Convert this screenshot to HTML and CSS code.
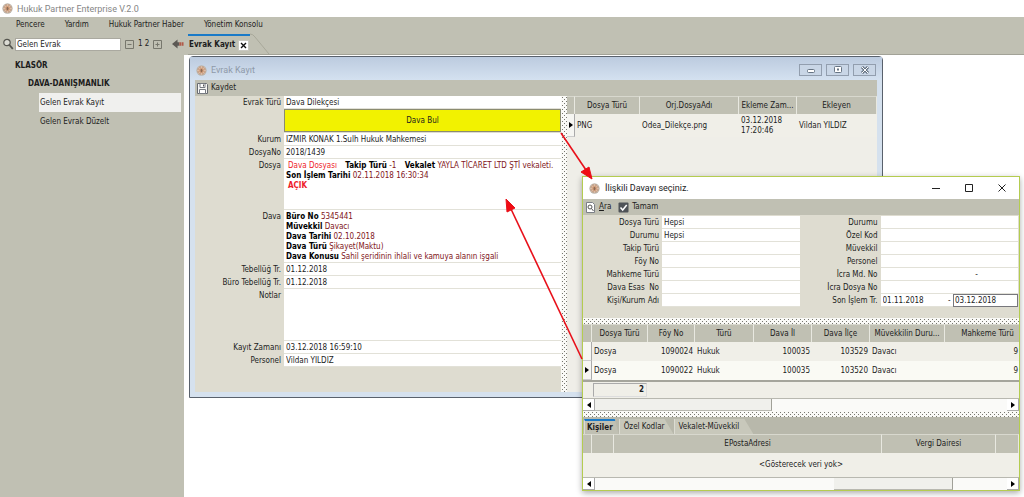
FILE: index.html
```html
<!DOCTYPE html>
<html lang="tr">
<head>
<meta charset="utf-8">
<title>Hukuk Partner Enterprise V.2.0</title>
<link rel="stylesheet" href="styles.css">
</head>
<body>
<svg class="defs" aria-hidden="true">
  <symbol id="logo" viewBox="0 0 12 12">
    <circle cx="6" cy="6" r="5.6" fill="#b9b4ac"/>
    <circle cx="6" cy="6" r="4.8" fill="#c9a58c"/>
    <path d="M6 1.2v9.6M1.2 6h9.6M2.6 2.6l6.8 6.8M9.4 2.6L2.6 9.4" stroke="#e3cdbb" stroke-width=".7"/>
    <circle cx="6" cy="6" r="2.6" fill="#d9a27c"/>
    <path d="M4.8 5.2l1.300-1 1.2 1.2-.6 2.6H5.2z" fill="#8c6a56"/>
  </symbol>
</svg>

<header class="titlebar"><svg class="logo"><use href="#logo"/></svg><span>Hukuk Partner Enterprise V.2.0</span></header>
<nav class="menu">
  <a href="#">Pencere</a><a href="#">Yardım</a><a href="#">Hukuk Partner Haber</a><a href="#">Yönetim Konsolu</a>
</nav>

<div class="workspace">
  <aside class="sidebar">
    <div class="search">
      <svg class="lens" viewBox="0 0 12 12"><circle cx="5" cy="4.5" r="3.2" fill="#dcdcd4" stroke="#55554f" stroke-width="1.2"/><path d="M7.4 7l3.4 3.8" stroke="#55554f" stroke-width="1.8"/></svg>
      <input class="search-input" type="text" value="Gelen Evrak" aria-label="Ara">
      <button class="step" aria-label="Daralt"><svg viewBox="0 0 9 9"><path d="M.5.5h8v8h-8zM2.5 4.5h4" fill="none" stroke="#77776d"/></svg></button>
      <span>1 2</span>
      <button class="step" aria-label="Genişlet"><svg viewBox="0 0 9 9"><path d="M.5.5h8v8h-8zM2.5 4.5h4M4.5 2.5v4" fill="none" stroke="#77776d"/></svg></button>
      <button class="back" aria-label="Geri"><svg viewBox="0 0 13 10"><path d="M0 5l6-5v3h2v4H6v3z" fill="#5c5954"/><path d="M8 3h2v4h-2zM10.500 3h2v4h-2z" fill="#b05a4a"/></svg></button>
    </div>
    <ul class="tree">
      <li class="root">KLASÖR</li>
      <li class="branch">DAVA-DANIŞMANLIK</li>
      <li><a class="leaf selected" href="#">Gelen Evrak Kayıt</a></li>
      <li><a class="leaf" href="#">Gelen Evrak Düzelt</a></li>
    </ul>
  </aside>

  <main class="main">
    <div class="doc-tabs">
      <div class="doc-tab"><span>Evrak Kayıt</span><button class="tab-close" aria-label="Kapat"><svg viewBox="0 0 9 9"><path d="M2 2l5 5M7 2L2 7" stroke="#111" stroke-width="1.400"/></svg></button></div>
      <svg class="slope" viewBox="0 0 20 21"><path d="M0 1q3 0 5 3l14 17" fill="none" stroke="#a8a89a"/></svg>
    </div>
    <div class="desktop">
      <section class="window">
        <header class="window-title">
          <svg class="logo"><use href="#logo"/></svg><h2>Evrak Kayıt</h2>
          <button class="win-btn" aria-label="Küçült"><svg viewBox="0 0 12 8"><rect x="2.500" y="3.500" width="7" height="3" rx="1" fill="#fff" stroke="#667484"/></svg></button>
          <button class="win-btn" aria-label="Büyüt"><svg viewBox="0 0 12 8"><rect x="2.500" y=".5" width="7" height="6" rx="1" fill="#fff" stroke="#667484"/><path d="M5 2.500h2v2H5z" fill="#667484"/></svg></button>
          <button class="win-btn" aria-label="Kapat"><svg viewBox="0 0 12 8"><path d="M3 1l6 6M9 1L3 7" stroke="#667484" stroke-width="3"/><path d="M3 1l6 6M9 1L3 7" stroke="#fff"/></svg></button>
        </header>
        <div class="window-body">
          <div class="toolbar">
            <button class="tool"><svg viewBox="0 0 11 11"><path d="M.5.5h9l1 1v9H.5z" fill="#f6f6f4" stroke="#666a70"/><path d="M3 .5h5v4H3zM2.500 6.500h6v4h-6z" fill="#fff" stroke="#777b82"/><path d="M6 1.500h1v2H6z" fill="#555"/></svg>Kaydet</button>
          </div>
          <div class="panes">
            <form class="record">
              <label for="tur">Evrak Türü</label><input id="tur" class="field" value="Dava Dilekçesi">
              <span></span><button class="find" type="button">Dava Bul</button>
              <label for="kurum">Kurum</label><input id="kurum" class="field" value="İZMİR KONAK 1.Sulh Hukuk Mahkemesi">
              <label for="dosyano">DosyaNo</label><input id="dosyano" class="field" value="2018/1439">
              <span class="label">Dosya</span>
              <div class="rich">
                <p class="inset"><i class="red">Dava Dosyası</i> <b class="spaced">Takip Türü</b> <i>-1</i> <b class="spaced">Vekalet</b> <i>YAYLA TİCARET LTD ŞTİ vekaleti.</i></p>
                <p><b>Son İşlem Tarihi</b> <i>02.11.2018 16:30:34</i></p>
                <p class="inset"><b class="red">AÇIK</b></p>
              </div>
              <span class="label">Dava</span>
              <div class="rich long">
                <p><b>Büro No</b> <i>5345441</i></p>
                <p><b>Müvekkil</b> <i>Davacı</i></p>
                <p><b>Dava Tarihi</b> <i>02.10.2018</i></p>
                <p><b>Dava Türü</b> <i>Şikayet(Maktu)</i></p>
                <p><b>Dava Konusu</b> <i>Sahil şeridinin ihlali ve kamuya alanın işgali</i></p>
              </div>
              <label for="teb">Tebellüğ Tr.</label><input id="teb" class="field" value="01.12.2018">
              <label for="bteb">Büro Tebellüğ Tr.</label><input id="bteb" class="field" value="01.12.2018">
              <label for="notlar">Notlar</label><textarea id="notlar" class="field notes"></textarea>
              <label for="kayit">Kayıt Zamanı</label><input id="kayit" class="field" value="03.12.2018 16:59:10">
              <label for="pers">Personel</label><input id="pers" class="field" value="Vildan YILDIZ">
            </form>
            <div class="splitter"></div>
            <div class="files">
              <table class="grid">
                <colgroup><col class="w-ind"><col class="w-type"><col class="w-name"><col class="w-date"><col></colgroup>
                <thead><tr><th></th><th>Dosya Türü</th><th>Orj.DosyaAdı</th><th>Ekleme Zam...</th><th>Ekleyen</th></tr></thead>
                <tbody><tr class="tall"><td class="mark"><span class="tri"></span></td><td>PNG</td><td>Odea_Dilekçe.png</td><td>03.12.2018 17:20:46</td><td>Vildan YILDIZ</td></tr></tbody>
              </table>
            </div>
          </div>
        </div>
      </section>

      <section class="dialog" role="dialog" aria-label="İlişkili Davayı seçiniz.">
        <header class="dialog-title">
          <svg class="logo"><use href="#logo"/></svg><h2>İlişkili Davayı seçiniz.</h2>
          <button aria-label="Küçült"><svg viewBox="0 0 10 10"><path d="M1 5.500h8" stroke="#222"/></svg></button>
          <button aria-label="Büyüt"><svg viewBox="0 0 10 10"><path d="M1.500 1.500h7v7h-7z" fill="none" stroke="#222"/></svg></button>
          <button aria-label="Kapat"><svg viewBox="0 0 10 10"><path d="M1.500 1.500l7 7M8.500 1.500l-7 7" stroke="#222"/></svg></button>
        </header>
        <div class="toolbar">
          <button class="tool"><svg viewBox="0 0 11 11"><path d="M1.500.5h6l2 2v8h-8z" fill="#fff" stroke="#7b7f86"/><circle cx="5" cy="5" r="2" fill="none" stroke="#555"/><path d="M6.500 6.500l2 2.500" stroke="#555"/></svg><span><u>A</u>ra</span></button>
          <button class="tool"><svg viewBox="0 0 11 11"><rect x=".5" y=".5" width="10" height="10" rx="1" fill="#4f5358"/><path d="M2.500 5.500L4.700 8l4-5" fill="none" stroke="#fff" stroke-width="1.500"/></svg>Tamam</button>
        </div>
        <form class="filters">
          <div class="filter-col">
            <label for="f1">Dosya Türü</label><input id="f1" class="field" value="Hepsi">
            <label for="f2">Durumu</label><input id="f2" class="field" value="Hepsi">
            <label for="f3">Takip Türü</label><input id="f3" class="field">
            <label for="f4">Föy No</label><input id="f4" class="field">
            <label for="f5">Mahkeme Türü</label><input id="f5" class="field">
            <label for="f6">Dava Esas&nbsp; No</label><input id="f6" class="field">
            <label for="f7">Kişi/Kurum Adı</label><input id="f7" class="field">
          </div>
          <div class="filter-col">
            <label for="g1">Durumu</label><input id="g1" class="field">
            <label for="g2">Özel Kod</label><input id="g2" class="field">
            <label for="g3">Müvekkil</label><input id="g3" class="field">
            <label for="g4">Personel</label><input id="g4" class="field">
            <label for="g5">İcra Md. No</label><div class="pair even"><input id="g5" class="field"><span>-</span><input class="field" aria-label="İcra Md. No 2"></div>
            <label for="g6">İcra Dosya No</label><input id="g6" class="field">
            <label for="g7">Son İşlem Tr.</label><div class="pair"><input id="g7" class="field" value="01.11.2018"><span>-</span><input class="field focus" value="03.12.2018" aria-label="Bitiş tarihi"></div>
          </div>
        </form>
        <div class="splitter flat"></div>
        <div class="clip">
          <table class="grid cases">
            <colgroup><col class="c0"><col class="c1"><col class="c2"><col class="c3"><col class="c4"><col class="c4"><col class="c6"><col class="c7"></colgroup>
            <thead><tr><th></th><th>Dosya Türü</th><th>Föy No</th><th>Türü</th><th>Dava İl</th><th>Dava İlçe</th><th>Müvekkilin Duru...</th><th>Mahkeme Türü</th></tr></thead>
            <tbody>
              <tr><td class="mark"></td><td>Dosya</td><td class="num">1090024</td><td>Hukuk</td><td class="num">100035</td><td class="num">103529</td><td>Davacı</td><td class="num far">9</td></tr>
              <tr><td class="mark"><span class="tri"></span></td><td>Dosya</td><td class="num">1090022</td><td>Hukuk</td><td class="num">100035</td><td class="num">103520</td><td>Davacı</td><td class="num far">9</td></tr>
            </tbody>
          </table>
        </div>
        <div class="summary"><b>2</b></div>
        <div class="scroll"><button class="arrow" aria-label="Sola"><span class="tri left"></span></button><span class="track"><span class="thumb first"></span></span><button class="arrow" aria-label="Sağa"><span class="tri"></span></button></div>
        <div class="splitter flat"></div>
        <div class="subtabs"><button class="subtab active">Kişiler</button><button class="subtab">Özel Kodlar</button><button class="subtab">Vekalet-Müvekkil</button></div>
        <table class="grid people">
          <colgroup><col class="c0"><col class="p1"><col><col class="p3"><col class="p4"></colgroup>
          <thead><tr><th></th><th></th><th>EPostaAdresi</th><th>Vergi Dairesi</th><th></th></tr></thead>
          <tbody><tr><td class="empty" colspan="5">&lt;Gösterecek veri yok&gt;</td></tr></tbody>
        </table>
        <div class="scroll"><button class="arrow" aria-label="Sola"><span class="tri left"></span></button><span class="track"><span class="thumb second"></span></span><button class="arrow" aria-label="Sağa"><span class="tri"></span></button></div>
      </section>

      <svg class="arrows" viewBox="0 0 420 320" aria-hidden="true">
        <g stroke="#e8101a" stroke-width="1.600" fill="#f00c14">
          <path d="M373 78l25 37"/><path d="M404 124l-11-7 8-5z" stroke-width="1"/>
          <path d="M394 304L323 154"/><path d="M318 144l1 13 8-4z" stroke-width="1"/>
        </g>
      </svg>
    </div>
  </main>
</div>
</body>
</html>
```
FILE: styles.css
```css
* { box-sizing: border-box; }
body {
  margin: 0;
  min-height: 100vh;
  display: flex;
  flex-direction: column;
  background: #fff;
  color: #1c1c1c;
  font: 8px/10px "DejaVu Sans Condensed", "Open Sans", sans-serif;
}
button, input, textarea { font: inherit; color: inherit; margin: 0; padding: 0; border: 0; border-radius: 0; background: none; }
h2, p, ul { margin: 0; padding: 0; font-weight: normal; }
i { font-style: normal; }
a { color: inherit; text-decoration: none; }
svg { display: block; flex: none; }
.defs { position: absolute; width: 0; height: 0; }
.logo { width: 11px; height: 11px; }

.titlebar {
  display: flex; align-items: center; gap: 4px;
  height: 17px; padding-left: 2px;
  color: #858585; font: 9px/12px Roboto, sans-serif;
}
.menu { display: flex; gap: 20px; padding: 3px 16px; background: #c0c0b3; }

.workspace { flex: 1; display: grid; grid-template-columns: 188px 1fr; }
.sidebar { background: linear-gradient(#c0c0b3, #c0c0b3) 0 0 / 184px 100% no-repeat, linear-gradient(#c0c0b3, #c0c0b3) 0 0 / 100% 22px no-repeat; }
.search { display: flex; align-items: center; height: 22px; padding-left: 2px; }
.lens { width: 12px; height: 12px; }
.search-input { width: 106px; height: 13px; margin: 0 4px 0 1px; padding: 0 1px; background: #fff; border: 1px solid #aaa9a0; }
.step svg { width: 9px; height: 9px; }
.search span { margin: 0 4px; }
.back { margin-left: 10px; }
.back svg { width: 12px; height: 10px; }
.tree { list-style: none; padding-top: 2px; line-height: 18px; }
.root { padding-left: 15px; font-weight: bold; }
.branch { padding-left: 28px; font-weight: bold; }
.leaf { display: block; width: 142px; margin-left: 39px; padding-left: 1px; line-height: 19px; }
.selected { background: #f0f0ee; }

.main { display: flex; flex-direction: column; min-width: 0; }
.doc-tabs { display: flex; height: 22px; background: #c0c0b3; border-bottom: 1px solid #a2a297; }
.doc-tab { display: flex; align-items: center; gap: 3px; margin-top: 1px; padding: 0 1px; border-top: 2px solid #1a7ac8; font-weight: bold; }
.tab-close { background: #fff; border: 1px solid #c8c8c0; }
.tab-close svg { width: 9px; height: 9px; }
.slope { width: 20px; height: 21px; }
.desktop { position: relative; flex: 1; background: #fff; }

.window {
  position: absolute; top: 1px; left: 1px; right: 141px;
  padding: 0 5px 5px;
  background: #d5e1ee; border: 1px solid #59616c; border-radius: 4px 4px 0 0;
}
.window-title { display: flex; align-items: center; gap: 4px; height: 23px; margin: 0 -5px; padding: 3px 6px 0; background: linear-gradient(#bccbdf, #d4e1f0); color: #8f9aa9; }
h2 { flex: 1; font: 9px/12px Roboto, sans-serif; }
.win-btn { display: grid; place-items: center; width: 23px; height: 12px; border: 1px solid #929eae; background: #c9d6e6; }
.win-btn svg { width: 12px; height: 8px; }
.window-body { background: #dedcd0; }
.toolbar { display: flex; gap: 7px; height: 16px; padding: 0 2px; background: #c0c0b3; }
.tool { display: flex; align-items: center; gap: 3px; }
.tool svg { width: 11px; height: 11px; }
.panes { display: grid; grid-template-columns: 366px 6px 1fr; }
.record { display: grid; grid-template-columns: 89px 1fr; align-content: start; padding-bottom: 25px; }
label, .label { padding: 0 3px 0 0; line-height: 13px; text-align: right; }
.field { width: 100%; min-width: 0; height: 13px; padding: 0 2px; background: #fff; border-bottom: 1px solid #e2e1d8; outline: 0; }
.notes { height: 52px; resize: none; display: block; }
.find { height: 23px; margin: 0 0 1px; background: #f2f200; border: 1px solid #8b8b70; }
.rich { height: 51px; padding: 2px 2px 0; background: #fff; border-bottom: 1px solid #e2e1d8; white-space: nowrap; color: #801420; }
.long { height: 53px; }
.rich b { color: #000; }
.rich .red { color: #ee1c2a; }
.rich .inset { padding-left: 2px; }
.spaced { margin-left: 6px; }
.splitter {
  background:
    conic-gradient(at 1px 1px, transparent 75%, #77776f 0) 1px 1px / 4px 4px,
    conic-gradient(at 1px 1px, transparent 75%, #77776f 0) 3px 3px / 4px 4px,
    #fafaf7;
}
.flat { height: 6px; }
.files { background: #efeee8; overflow: hidden; }

.grid { width: 100%; table-layout: fixed; border-collapse: separate; border-spacing: 0; background: #f0efe8; }
.grid th { height: 18px; padding: 0 2px; font-weight: normal; background: #c0c0b3; border-right: 1px solid #e8e8e0; border-top: 1px solid #d8d8ce; white-space: nowrap; overflow: hidden; }
.grid td { height: 19px; padding: 0 2px; }
.grid tr.tall td { height: 23px; }
.grid .mark { padding: 0 0 0 2px; border-right: 1px solid #aaa; border-bottom: 1px solid #ccc; background: #f6f6f2; }
.w-ind { width: 8px; }
.w-type { width: 65px; }
.w-name { width: 99px; }
.w-date { width: 58px; }
.tri { display: block; width: 0; height: 0; border: 3px solid transparent; border-left: 4px solid #000; border-right: 0; }
.tri.left { border-left: 0; border-right: 4px solid #000; }

.dialog { position: absolute; top: 121px; left: 394px; right: 4px; background: #dedcd0; border: 1px solid #b4cc50; box-shadow: 0 2px 6px #0005; }
.dialog-title { display: flex; align-items: center; gap: 5px; height: 22px; padding: 0 3px 0 6px; background: #fff; color: #222; }
.dialog-title button { width: 28px; display: grid; place-items: center; }
.dialog-title svg:not(.logo) { width: 10px; height: 10px; }
.filters { display: grid; grid-template-columns: 1fr 1fr; gap: 2px; padding: 1px 1px 11px 0; }
.filter-col { display: grid; grid-template-columns: 79px 1fr; }
.pair { display: grid; grid-template-columns: 1fr 5px 65px; height: 13px; background: #fff; border-bottom: 1px solid #e2e1d8; }
.pair.even { grid-template-columns: 5fr 5px 2fr; }
.pair span { line-height: 13px; }
.pair .field { height: 12px; border-bottom: 0; }
.pair .focus { height: 13px; border: 1px solid #77777c; padding: 0 1px; }
.clip { overflow: hidden; }
.cases { width: 448px; }
.cases tbody tr:last-child { background: #fafaf4; }
.c0 { width: 9px; }
.c1 { width: 56px; }
.c2 { width: 47px; }
.c3 { width: 59px; }
.c4 { width: 58px; }
.c6 { width: 75px; }
.num { text-align: right; }
.grid .far { padding-right: 13px; }
.summary { height: 18px; padding: 1px 0 1px 10px; background: #f0efe8; border-top: 2px solid #a5a59c; }
.summary b { display: block; width: 54px; height: 14px; padding: 1px 2px; text-align: right; border: 1px solid #aaa; border-color: #aaa #ddd #ddd #aaa; }
.scroll { display: flex; height: 13px; background: #fafaf8; border-top: 1px solid #b8b8b0; }
.arrow { display: grid; place-items: center; width: 12px; border-right: 1px solid #aaa; border-bottom: 1px solid #aaa; background: #fff; }
.track { flex: 1; display: flex; }
.thumb { background: #f0f0ec; border-right: 1px solid #a0a098; border-bottom: 1px solid #b8b8b0; }
.first { width: 43%; }
.second { width: 29%; margin-left: 58%; }
.subtabs { display: flex; height: 17px; padding: 2px 1px 0; background: #b8b8ab; }
.subtab { padding: 0 9px 0 4px; background: #c8c8bb; border-left: 1px solid #dcdcd2; clip-path: polygon(0 0, calc(100% - 9px) 0, 100% 100%, 0 100%); }
.subtab:last-child { padding-right: 14px; }
.subtab.active { padding: 0 6px 0 2px; border-top: 2px solid #1a7ac8; font-weight: bold; background: #c0c0b3; clip-path: polygon(0 0, calc(100% - 4px) 0, 100% 100%, 0 100%); }
.p1 { width: 22px; }
.p3 { width: 114px; }
.p4 { width: 23px; }
.people th { height: 19px; }
.people td.empty { height: 24px; text-align: center; }
.arrows { position: absolute; top: 0; left: 0; width: 420px; height: 320px; pointer-events: none; }
```
